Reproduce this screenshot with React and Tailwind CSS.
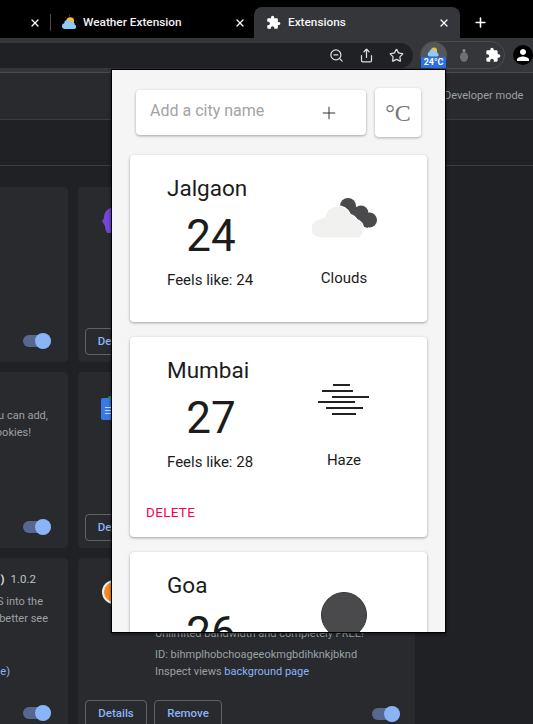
import React from "react";
import { Plus, Share, Star, X, ZoomOut } from "lucide-react";
import { MdExtension, MdPerson } from "react-icons/md";

const SunCloud = ({ className }) => (
  <svg viewBox="0 0 24 24" className={className}>
    <g stroke="#6b5a1e" strokeWidth="1">
      <path d="M12 1v2.5M5.5 4l1.5 2M18.5 4l-1.5 2M21 10h2" />
    </g>
    <circle cx="13" cy="10" r="5.5" fill="#fbc02d" />
    <path
      d="M5 21a4 4 0 0 1-.6-7.9A5 5 0 0 1 13.8 11a4.5 4.5 0 0 1 5.7 4.2A3 3 0 0 1 19 21z"
      fill="#90caf9"
    />
  </svg>
);

const Toggle = () => (
  <div className="relative h-[12px] w-[28px] rounded-full bg-[#56688f]">
    <div className="absolute right-0 top-[-2px] h-[16px] w-[16px] rounded-full bg-[#8ab4f8]" />
  </div>
);

const OutlineBtn = ({ children, className }) => (
  <div
    className={`flex h-[27px] items-center justify-center rounded border border-[#5f6368] text-[11.5px] font-medium text-[#8ab4f8] ${className}`}
  >
    {children}
  </div>
);

const WeatherCard = ({ city, temp, feels, label, icon, canDelete, className }) => (
  <div className={`shrink-0 rounded bg-white shadow-[0_1px_3px_rgba(0,0,0,0.35)] ${className}`}>
    <div className="flex pl-[37px] pt-[18px]">
      <div className="flex w-[88px] flex-col">
        <div className="whitespace-nowrap text-[22.5px] leading-[30px] text-[#1c1c1c]">{city}</div>
        <div className="mt-[3px] text-center text-[44px] leading-[60px] text-[#1c1c1c]">{temp}</div>
        {feels && (
          <div className="mt-[3px] whitespace-nowrap text-[15px] leading-[22px] text-[#1c1c1c]">
            Feels like: {feels}
          </div>
        )}
      </div>
      <div className="ml-[39px] flex w-[100px] flex-col items-center">
        <div className="flex h-[90px] w-full items-center justify-center">{icon}</div>
        {label && <div className="mt-[4px] text-[15px] leading-[22px] text-[#1c1c1c]">{label}</div>}
      </div>
    </div>
    {canDelete && (
      <div className="mt-[29px] pl-[16px] text-[13.5px] leading-[20px] tracking-[0.3px] text-[#f50057]">
        DELETE
      </div>
    )}
  </div>
);

const CloudsIcon = () => (
  <svg width="66" height="41" viewBox="0 0 66 41" className="ml-[2px]">
    <g fill="#4a4a4c">
      <circle cx="36" cy="8" r="8" />
      <circle cx="49" cy="15" r="7.5" />
      <circle cx="57.5" cy="22" r="7.5" />
      <path d="M30 6l20 4 6 20-14-4z" />
    </g>
    <g fill="#f1f1f0" stroke="#fff" strokeWidth="1.2">
      <path d="M9 40a9.5 9.5 0 0 1-1-19 a16 16 0 0 1 4.500-1.500 a13.500 13.500 0 0 1 26-3 a10 10 0 0 1 6.500 5 a10.500 10.500 0 0 1 2 18.500z" />
    </g>
  </svg>
);

const HazeIcon = () => (
  <svg width="52" height="32" viewBox="0 0 52 32" stroke="#222" strokeWidth="1.8">
    <path d="M15 1h17M4 7h31M14 13h37M0 18h37M8 24h37M14 30h24" />
  </svg>
);

const App = () => {
  return (
    <div className="relative h-[724px] w-[533px] overflow-hidden bg-[#202124] font-['Roboto',sans-serif]">
      {/* tab strip */}
      <div className="flex h-[38px] items-end bg-black text-[11.8px] font-medium text-[#e8eaed]">
        <div className="flex h-[31px] w-[50px] items-center justify-end pr-[9px]">
          <X size={12} strokeWidth={2.5} color="#fff" />
        </div>
        <div className="mb-[7px] h-[17px] w-px bg-[#4a4a4a]" />
        <div className="flex h-[31px] w-[203px] items-center pl-[10px] pr-[8px]">
          <SunCloud className="h-[17px] w-[17px]" />
          <span className="ml-[5px] whitespace-nowrap text-[#f1f3f4]">Weather Extension</span>
          <X size={12} strokeWidth={2.5} color="#fff" className="ml-auto" />
        </div>
        <div className="flex h-[31px] w-[206px] items-center rounded-t-[8px] bg-[#35363a] pl-[12px] pr-[10px]">
          <MdExtension size={15} color="#fff" />
          <span className="ml-[7px] whitespace-nowrap text-[#f1f3f4]">Extensions</span>
          <X size={12} strokeWidth={2.5} color="#fff" className="ml-auto" />
        </div>
        <div className="flex h-[31px] w-[40px] items-center justify-center">
          <Plus size={15} strokeWidth={2.5} color="#fff" />
        </div>
      </div>

      {/* toolbar */}
      <div className="flex h-[35px] items-center border-b border-[#4a4b4e] bg-[#35363a]">
        <div className="flex h-[25px] w-[413px] items-center justify-end gap-[15px] rounded-r-full bg-[#202124] pr-[9px]">
          <ZoomOut size={15} color="#dadce0" />
          <Share size={15} color="#dadce0" />
          <Star size={15} color="#dadce0" />
        </div>
        <div className="relative ml-[7px] flex h-[28px] w-[85px] items-center rounded-full border border-[#4a4b4e]">
          <div className="relative h-[26px] w-[26px] shrink-0 rounded-full bg-[#55565a]">
            <SunCloud className="absolute left-[6px] top-[3px] h-[13px] w-[13px]" />
            <div className="absolute left-0 top-[15px] w-[25px] rounded-[1px] bg-[#2a6fe8] text-center text-[9px] font-bold leading-[11px] text-white">
              24°C
            </div>
          </div>
          <svg width="8" height="13" viewBox="0 0 8 13" className="ml-[13px]">
            <circle cx="4" cy="1.500" r="1.500" fill="#8a8b8e" />
            <ellipse cx="4" cy="8" rx="4" ry="5" fill="#6f7074" />
          </svg>
          <MdExtension size={16} color="#fff" className="ml-[17px]" />
        </div>
        <div className="ml-[8px] flex h-[20px] w-[20px] shrink-0 items-center justify-center rounded-full bg-black">
          <MdPerson size={18} color="#fff" />
        </div>
      </div>

      {/* extensions page header */}
      <div className="flex h-[47px] items-center justify-end border-b border-[#3c3d40] bg-[#292a2d]">
        <span className="w-[89px] whitespace-nowrap text-[11px] text-[#9aa0a6]">Developer mode</span>
      </div>
      <div className="h-[46px] border-b border-[#3c3d40] bg-[#202124]" />

      {/* cards behind the popup */}
      <div className="ml-[-269px] mt-[21px] grid w-[684px] grid-cols-2 gap-[10px] text-[11px] leading-[17px] text-[#9aa0a6]">
        <div className="flex h-[175px] flex-col rounded bg-[#292a2d] pr-[17px]">
          <div className="mt-auto flex items-center justify-end pb-[15px]">
            <Toggle />
          </div>
        </div>
        <div className="flex h-[175px] flex-col rounded bg-[#292a2d] pl-[24px]">
          <svg width="24" height="26" viewBox="0 0 24 26" className="mt-[20px]">
            <path d="M0 14l2-3C2 4 7 0 13 0c6 0 11 4 11 11v15H5c-1-2-2-5-2-7-1-2-2-3-3-5z" fill="#7446d8" />
          </svg>
          <OutlineBtn className="mb-[7px] mt-auto ml-[-17px] w-[61px]">Details</OutlineBtn>
        </div>

        <div className="flex h-[176px] flex-col rounded bg-[#292a2d] pr-[17px]">
          <div className="pt-[35px] text-right">
            <div className="pr-[3px]">u can add,</div>
            <div className="pr-[20px]">ookies!</div>
          </div>
          <div className="mt-auto flex items-center justify-end pb-[15px]">
            <Toggle />
          </div>
        </div>
        <div className="flex h-[176px] flex-col rounded bg-[#292a2d] pl-[23px]">
          <div className="relative mt-[26px] flex h-[22px] w-[20px] flex-col gap-[2px] rounded-[2px] bg-[#3b78e7] pl-[4px] pt-[9px]">
            <div className="absolute left-[7px] top-[-2px] h-[3px] w-[6px] rounded-t-[2px] bg-[#1e9e5a]" />
            <div className="h-[1px] w-[12px] bg-[#c9dcfb]" />
            <div className="h-[1px] w-[12px] bg-[#c9dcfb]" />
            <div className="h-[1px] w-[12px] bg-[#c9dcfb]" />
          </div>
          <OutlineBtn className="mb-[7px] mt-auto ml-[-16px] w-[61px]">Details</OutlineBtn>
        </div>

        <div className="flex h-[176px] flex-col rounded bg-[#292a2d] pr-[17px]">
          <div className="pt-[13px] text-right">
            <div className="pr-[15px] text-[11.5px] text-[#bdc1c6]">
              <span className="font-medium text-[#e8eaed]">)</span>
              <span className="ml-[6px]">1.0.2</span>
            </div>
            <div className="mt-[5px] pr-[8px]">S into the</div>
            <div className="pr-[3px]">better see</div>
            <div className="mt-[36px] pr-[41px] text-[#8ab4f8]">e)</div>
          </div>
          <div className="mt-auto flex items-center justify-end pb-[15px]">
            <Toggle />
          </div>
        </div>
        <div className="flex h-[176px] flex-col rounded bg-[#292a2d] pl-[7px]">
          <div className="ml-[17px] mt-[22px] h-[24px] w-[24px] rounded-full border-[2px] border-[#f0f0f0] bg-[#f28c1e]" />
          <div className="ml-[70px] mt-[21px] whitespace-nowrap">Unlimited bandwidth and completely FREE!</div>
          <div className="ml-[70px] mt-[4px] whitespace-nowrap">ID: bihmplhobchoageeokmgbdihknkjbknd</div>
          <div className="ml-[70px] whitespace-nowrap">
            Inspect views <span className="text-[#8ab4f8]">background page</span>
          </div>
          <div className="mb-[7px] mt-auto flex items-center gap-[7px] pr-[15px]">
            <OutlineBtn className="w-[62px]">Details</OutlineBtn>
            <OutlineBtn className="w-[68px]">Remove</OutlineBtn>
            <div className="ml-auto mb-[-1px]">
              <Toggle />
            </div>
          </div>
        </div>
      </div>

      {/* popup */}
      <div className="absolute left-[111px] top-[69px] flex h-[564px] w-[335px] flex-col overflow-hidden border border-black bg-[#f5f5f5] shadow-[0_1px_3px_rgba(0,0,0,0.6)]">
        <div className="flex items-center pl-[24px] pt-[18px]">
          <div className="flex h-[45px] w-[230px] items-center rounded bg-white pl-[14px] shadow-[0_1px_3px_rgba(0,0,0,0.35)]">
            <span className="mb-[4px] text-[16px] text-[#a3a3a3]">Add a city name</span>
            <Plus size={20} strokeWidth={1.2} color="#333" className="ml-[55px]" />
          </div>
          <div className="ml-[9px] flex h-[49px] w-[46px] items-center justify-center rounded bg-white font-['Liberation_Serif',serif] text-[24px] text-[#757575] shadow-[0_1px_3px_rgba(0,0,0,0.3)]">
            °C
          </div>
        </div>
        <div className="flex flex-col gap-[15px] pl-[18px] pr-[18px] pt-[18px]">
          <WeatherCard className="h-[167px]" city="Jalgaon" temp="24" feels="24" label="Clouds" icon={<CloudsIcon />} />
          <WeatherCard className="h-[200px]" city="Mumbai" temp="27" feels="28" label="Haze" icon={<HazeIcon />} canDelete />
          <WeatherCard
            className="h-[200px]"
            city="Goa"
            temp="26"
            icon={<div className="h-[46px] w-[46px] rounded-full border border-[#333] bg-[#4a4a4c]" />}
          />
        </div>
      </div>
    </div>
  );
};

export default App;
